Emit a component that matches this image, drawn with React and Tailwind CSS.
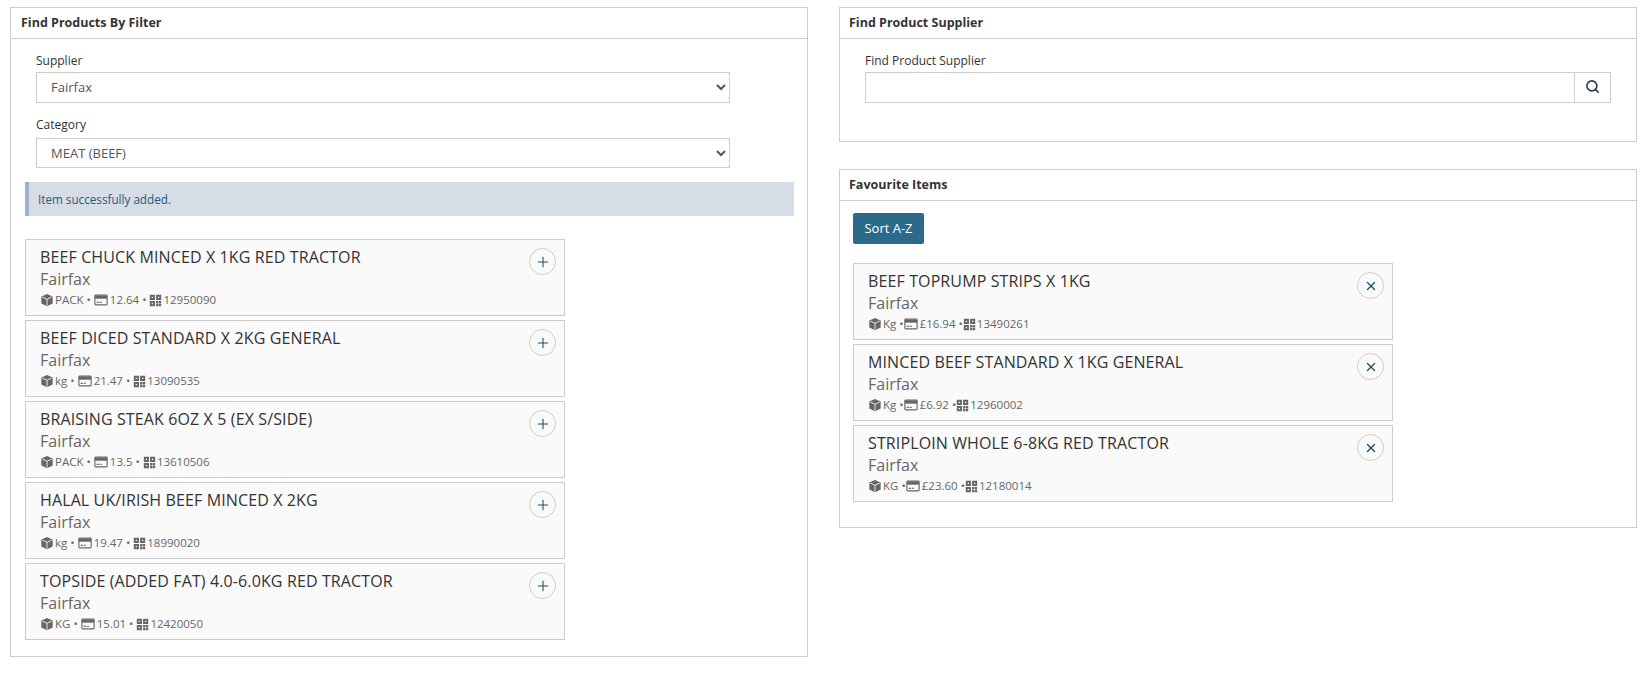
import React from "react";
import { Search, Plus, X } from "lucide-react";

const PRODUCTS = [
  { name: "BEEF CHUCK MINCED X 1KG RED TRACTOR", unit: "PACK", price: "12.64", code: "12950090" },
  { name: "BEEF DICED STANDARD X 2KG GENERAL", unit: "kg", price: "21.47", code: "13090535" },
  { name: "BRAISING STEAK 6OZ X 5 (EX S/SIDE)", unit: "PACK", price: "13.5", code: "13610506" },
  { name: "HALAL UK/IRISH BEEF MINCED X 2KG", unit: "kg", price: "19.47", code: "18990020" },
  { name: "TOPSIDE (ADDED FAT) 4.0-6.0KG RED TRACTOR", unit: "KG", price: "15.01", code: "12420050" },
];

const FAVOURITES = [
  { name: "BEEF TOPRUMP STRIPS X 1KG", unit: "Kg", price: "£16.94", code: "13490261" },
  { name: "MINCED BEEF STANDARD X 1KG GENERAL", unit: "Kg", price: "£6.92", code: "12960002" },
  { name: "STRIPLOIN WHOLE 6-8KG RED TRACTOR", unit: "KG", price: "£23.60", code: "12180014" },
];

const BoxIcon = () => (
  <svg viewBox="0 0 16 16" className="w-[14px] h-[14px] mr-[1px]" fill="currentColor">
    <path d="M8 1 14.5 4v8L8 15 1.500 12V4z" />
    <path d="M2.500 4.500 8 7.200l5.500-2.700M8 7.200V14.500" fill="none" stroke="#fafafa" strokeWidth="1" />
  </svg>
);

const CardIcon = () => (
  <svg viewBox="0 0 16 16" className="w-[14px] h-[14px] mr-[2px]" fill="currentColor">
    <rect x="1" y="2.500" width="14" height="11" rx="1" fill="none" stroke="currentColor" strokeWidth="1.300" />
    <rect x="1" y="3" width="14" height="3.500" />
    <rect x="3" y="10" width="3" height="1.300" />
    <rect x="7" y="10" width="2" height="1.300" />
  </svg>
);

const QrIcon = () => (
  <svg viewBox="0 0 16 16" className="w-[13px] h-[13px] mr-[1px]" fill="currentColor">
    <path fillRule="evenodd" d="M1 1h6.300v6.300H1zM3.300 3.300v1.700h1.700V3.300z" />
    <path fillRule="evenodd" d="M8.700 1h6.300v6.300H8.700zM11 3.300v1.700h1.700V3.300z" />
    <path fillRule="evenodd" d="M1 8.700h6.300v6.300H1zM3.300 11v1.700h1.700V11z" />
    <path d="M8.700 8.700h3v3h-3zM12.300 8.700H15v3h-2.700zM8.700 12.300h3V15h-3zM12.300 12.300H15V15h-2.700z" />
  </svg>
);

const ItemCard = ({ item, children, tight }) => (
  <div className="relative w-[540px] h-[77px] border border-[#cccccc] bg-[#fafafa] pl-[14px] pt-[6px]">
    <div className="text-[16px] leading-[22px] tracking-[0.12px] text-[#333333]">{item.name}</div>
    <div className="text-[16px] leading-[22px] text-[#666666]">Fairfax</div>
    <div className="flex items-center text-[11.5px] leading-[20px] text-[#666666]">
      <BoxIcon />
      {item.unit}
      <span className={tight ? "ml-[3px]" : "mx-[3px]"}>•</span>
      <CardIcon />
      {item.price}
      <span className={tight ? "ml-[3px]" : "mx-[3px]"}>•</span>
      <QrIcon />
      {item.code}
    </div>
    <button className="absolute right-[8px] top-[8px] w-[27px] h-[27px] rounded-full border border-[#cccccc] flex items-center justify-center text-[#1f4f6b]">
      {children}
    </button>
  </div>
);

const Panel = ({ title, className, titleClass, children }) => (
  <div className={`border border-[#cccccc] bg-white ${className}`}>
    <div className={`h-[31px] border-b border-[#cccccc] text-[12.5px] leading-[29px] font-bold text-[#333333] ${titleClass}`}>
      {title}
    </div>
    {children}
  </div>
);

const Field = ({ label, value, labelClass, selectClass }) => (
  <div>
    <label className={`block text-[12px] leading-[20px] text-[#333333] ${labelClass}`}>{label}</label>
    <select
      defaultValue={value}
      className={`block w-[694px] border border-[#cccccc] bg-white pl-[10px] pr-[4px] text-[13px] text-[#555555] ${selectClass}`}
    >
      <option>{value}</option>
    </select>
  </div>
);

export default function App() {
  return (
    <div className="flex items-start gap-[31px] bg-white pl-[10px] pt-[7px] pr-[7px] h-[681px] font-['Open_Sans',sans-serif]">
      {/* left column */}
      <Panel title="Find Products By Filter" className="w-[798px] h-[650px]" titleClass="pl-[10px]">
        <div className="pt-[12px] pl-[25px] flex flex-col gap-[12px]">
          <Field label="Supplier" value="Fairfax" labelClass="mb-[1px]" selectClass="h-[31px] pb-[2px]" />
          <Field label="Category" value="MEAT (BEEF)" labelClass="mb-[3px]" selectClass="h-[30px]" />
        </div>
        <div className="ml-[14px] mt-[14px] w-[769px] h-[34px] bg-[#d6dde7] border-l-[4px] border-[#9db3c7] pl-[9px] text-[11.7px] leading-[34px] text-[#285a78]">
          Item successfully added.
        </div>
        <div className="ml-[14px] mt-[23px] flex flex-col gap-[4px]">
          {PRODUCTS.map((item) => (
            <ItemCard key={item.code} item={item}>
              <Plus size={16} strokeWidth={1.6} />
            </ItemCard>
          ))}
        </div>
      </Panel>

      {/* right column */}
      <div className="w-[798px] flex flex-col gap-[27px]">
        <Panel title="Find Product Supplier" className="h-[135px]" titleClass="pl-[9px]">
          <div className="pt-[12px] pl-[25px]">
            <label className="block text-[12px] leading-[20px] text-[#333333] mb-[1px]">Find Product Supplier</label>
            <div className="flex w-[746px] h-[31px] border border-[#cccccc]">
              <input className="flex-1 outline-none" />
              <button className="w-[36px] border-l border-[#cccccc] flex items-center justify-center text-[#2d3f4d] pb-[3px]">
                <Search size={15} strokeWidth={2.6} />
              </button>
            </div>
          </div>
        </Panel>
        <Panel title="Favourite Items" className="h-[359px]" titleClass="pl-[9px]">
          <div className="pt-[12px] pl-[13px]">
            <button className="w-[71px] h-[31px] rounded-[2px] bg-[#2b6a8a] text-[13px] text-white">Sort A-Z</button>
            <div className="mt-[19px] flex flex-col gap-[4px]">
              {FAVOURITES.map((item) => (
                <ItemCard key={item.code} item={item} tight>
                  <X size={14} strokeWidth={2.4} />
                </ItemCard>
              ))}
            </div>
          </div>
        </Panel>
      </div>
    </div>
  );
}
